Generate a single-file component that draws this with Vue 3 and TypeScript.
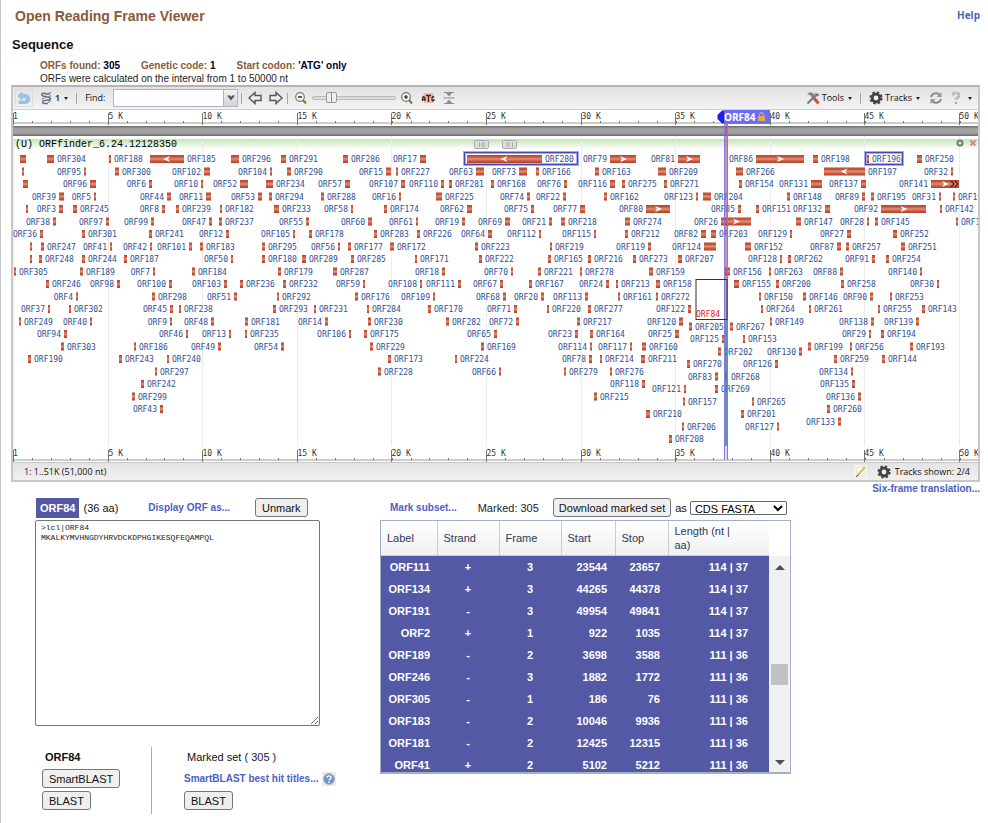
<script setup lang="ts">
import { ref } from 'vue'

interface Orf {
  name: string
  x: number
  y: number
  w: number
  labelX: number
  anchor: 'start' | 'end'
  arrow: '' | 'l' | 'r'
}

// Each line is one lane: "<number><side><x>,<width>[arrow]".
// ">" puts the label right of the bar, "<" left of it, "." draws no label.
const lanes: [number, string][] = [
  [0, '.20,6 304>47,7 188>109,2 185>150,34l 296>231,8 291>281,5 286>343,5 17<420,6 280>467,75l 79<610,26r 81<678,22r 86<756,48r 198>813,5 196>867,2 250>917,5'],
  [1, '.22,2 95<84,2 300>115,4 102<204,6 104<270,2 290>287,4 15<386,5 227>396,2 63<476,8 73<519,8 166>536,3 163>595,4 209>658,8 266>736,7 197>824,41l 32<951,2'],
  [2, '.23,5 96<90,6 6<149,3 10<201,2 52<240,8 234>266,7 57<345,5 107<401,4 110<441,3 281>449,3 168>491,3 76<564,3 116<610,5 275>622,3 271>664,3 154>739,3 131<811,11 137<861,5 141<931,28r'],
  [3, '39<59,5 5<94,2 44<167,4 11<206,5 53<258,4 294>269,3 288>321,3 16<399,2 225>436,6 74<527,3 22<563,3 162>604,3 123<696,2 204>703,8 148>787,3 89<862,3 195>871,3 31<939,2 191>953,2'],
  [4, '.26,2 3<59,4 245>73,4 8<162,3 239>176,3 182>220,2 233>274,5 58<351,2 174>384,3 62<467,5 75<531,3 77<580,5 80<646,24r 85<738,3 151>756,3 132<825,5 92<881,45r 142>940,2'],
  [5, '38<53,3 97<106,3 99<151,3 47<209,3 237>219,3 55<306,3 60<368,4 61<416,2 19<462,3 69<505,5 21<549,3 218>561,4 274>625,5 26<721,30r 147>796,5 28<867,2 145>875,3 192>956,2'],
  [6, '36<40,3 301>82,3 241>149,3 12<226,3 105<293,2 178>309,3 283>374,3 226>417,3 64<488,4 112<539,2 115<594,2 212>625,3 82<701,5 203>711,5 129<790,2 27<847,4 252>893,4'],
  [7, '.30,2 247>41,3 41<110,2 42<150,2 101<189,3 183>200,3 295>262,3 56<338,2 177>348,3 172>390,4 223>475,3 219>550,2 119<648,3 124<704,12 152>745,6 87<837,4 257>846,3 251>901,4'],
  [8, '.30,2 248>39,3 244>82,3 187>124,3 50<231,2 180>262,3 289>302,4 285>351,3 171>415,2 222>479,3 165>548,3 216>588,3 273>633,3 207>678,4 128<780,2 262>788,3 91<872,3 254>886,3'],
  [9, '305>14,2 189>80,3 7<153,2 184>192,3 179>278,3 287>333,4 18<442,3 70<511,2 221>538,3 278>580,2 159>649,4 156>724,6 263>769,2 88<840,3 140<920,2'],
  [10, '246>46,3 98<117,3 100<169,3 103<224,3 236>240,3 232>283,3 59<363,2 108<420,2 111<458,3 67<500,3 167>529,3 24<606,3 213>616,2 158>656,4 155>734,5 200>776,3 258>841,3 30<937,2'],
  [11, '4<76,2 298>152,3 51<234,3 292>277,2 176>355,3 109<433,2 68<503,3 20<541,3 113<585,3 161>618,2 272>656,2 150>759,2 146>803,3 90<870,3 253>890,2'],
  [12, '37<48,2 302>69,2 45<170,3 238>179,2 293>273,3 231>314,2 284>367,2 170>428,3 71<514,3 220>547,2 277>588,3 122<688,3 264>761,2 261>809,2 255>878,2 143>922,3'],
  [13, '249>19,2 40<90,2 9<170,2 48<211,3 181>245,3 14<325,3 230>368,3 282>446,3 72<516,3 217>577,3 120<679,4 149>770,2 138<871,3 139<916,3'],
  [13.4, '205>689,3 267>730,3'],
  [14, '94<64,3 46<186,2 13<229,2 235>245,2 106<349,2 175>364,3 65<494,3 23<575,3 164>590,3 25<675,4 29<869,2 194>881,3'],
  [14.4, '125<722,2 153>743,2'],
  [15, '303>61,3 186>134,2 49<218,3 54<281,3 229>370,3 169>481,3 114<590,2 117<630,2 160>642,4 199>808,3 256>850,2 193>910,3'],
  [15.4, '202>718,3 130<799,3'],
  [16, '190>28,3 243>119,3 240>167,2 173>388,3 224>455,2 78<589,3 214>600,2 211>641,4 259>834,3 144>882,3'],
  [16.4, '270>687,3 126<775,3'],
  [17, '297>155,2 228>378,3 66<499,2 279>564,2 276>610,2 134<851,2'],
  [17.4, '83<715,3 268>725,3'],
  [18, '242>141,3 118<642,3 135<852,3'],
  [18.4, '121<684,2 269>715,3'],
  [19, '299>132,3 215>594,3 136<858,3'],
  [19.4, '157>683,2 265>752,2'],
  [20, '43<160,3 260>827,3'],
  [20.4, '210>646,4 201>741,3'],
  [21, '133<838,3'],
  [21.4, '206>682,2 127<777,2'],
  [22.4, '208>669,3'],
]

const orfs: Orf[] = lanes.flatMap(([lane, line]) =>
  line.split(' ').map((item) => {
    const m = /^(\d*)([<>.])(\d+),(\d+)([lr]?)$/.exec(item)!
    const x = Number(m[3])
    const w = Number(m[4])
    return {
      name: m[1] ? `ORF${m[1]}` : '',
      x,
      w,
      y: 159 + lane * 12.5,
      labelX: m[2] === '<' ? x - 3 : x + w + 3,
      anchor: m[2] === '<' ? 'end' : 'start',
      arrow: m[5] as Orf['arrow'],
    }
  }),
)

const arrowPath = (o: Orf): string => {
  const c = o.x + o.w / 2
  return o.arrow === 'l'
    ? `M${c + 3} ${o.y - 3}L${c - 4} ${o.y}L${c + 3} ${o.y + 3}L${c + 1} ${o.y}Z`
    : `M${c - 3} ${o.y - 3}L${c + 4} ${o.y}L${c - 3} ${o.y + 3}L${c - 1} ${o.y}Z`
}

const major = Array.from({ length: 11 }, (_, i) => ({
  x: Math.round(13 + i * 94.6) + 0.5,
  text: i === 0 ? '1' : `${i * 5} K`,
}))
const minor = Array.from({ length: 51 }, (_, i) => Math.round(13 + i * 18.93) + 0.5)
const rulers = [
  { label: 119, top: 113, line: 123 },
  { label: 456, top: 450, line: 460 },
]

const rows: [string, string, number, number, number, string][] = [
  ['ORF111', '+', 3, 23544, 23657, '114 | 37'],
  ['ORF134', '+', 3, 44265, 44378, '114 | 37'],
  ['ORF191', '-', 3, 49954, 49841, '114 | 37'],
  ['ORF2', '+', 1, 922, 1035, '114 | 37'],
  ['ORF189', '-', 2, 3698, 3588, '111 | 36'],
  ['ORF246', '-', 3, 1882, 1772, '111 | 36'],
  ['ORF305', '-', 1, 186, 76, '111 | 36'],
  ['ORF183', '-', 2, 10046, 9936, '111 | 36'],
  ['ORF181', '-', 2, 12425, 12315, '111 | 36'],
  ['ORF41', '+', 2, 5102, 5212, '111 | 36'],
]

const find = ref('')
const zoom = ref(18)
const format = ref('CDS FASTA')
const sequence = ref('>lcl|ORF84\nMKALKYMVHNGDYHRVDCKDPHGIKESQFEQAMPQL')
</script>

<template>
  <main class="page">
    <header class="top">
      <h1>Open Reading Frame Viewer</h1>
      <a href="#help" class="help">Help</a>
    </header>
    <h2>Sequence</h2>
    <div class="facts">
      <span>ORFs found: <b>305</b></span>
      <span>Genetic code: <b>1</b></span>
      <span>Start codon: <b>'ATG' only</b></span>
    </div>
    <p class="note">ORFs were calculated on the interval from 1 to 50000 nt</p>

    <section class="viewer">
      <div class="toolbar">
        <button class="tool undo" aria-label="Go back">
          <svg width="14" height="14" viewBox="0 0 14 14"><path d="M1 5L5 1V3.500H8.500A4.500 4.500 0 0 1 8.500 12.500H2V10H8A2 2 0 0 0 8 6.500H5V9Z" fill="#9dc3ea" stroke="#7fabd8" stroke-width=".6" /></svg>
        </button>
        <button class="tool strand">
          <svg width="14" height="14" viewBox="0 0 14 14"><path d="M11.500 1.500C10 3.500 8 3.500 6 2.500C3 1.500 1.500 4 4 5C7 6 11 5.500 11.500 7.500C11.500 9.500 8 9 5.500 9.500C3 10 3 12 5 12.500H9" fill="none" stroke="#66727f" stroke-width="1.500" /><path d="M12 4.500C9.500 6.500 6 5.500 2.500 8.500M12 9.500L9 11.500" fill="none" stroke="#8793a0" stroke-width="1.200" /></svg>
          1<i class="caret"></i>
        </button>
        <span class="sep"></span>
        <label for="find">Find:</label>
        <span class="combo">
          <input id="find" v-model="find" type="text" />
          <button aria-label="Recent searches">
            <svg width="8" height="6" viewBox="0 0 8 6"><path d="M0 .5H3L4 2L5 .5H8L4 5.500Z" fill="#555" /></svg>
          </button>
        </span>
        <span class="sep tight"></span>
        <button class="tool" aria-label="Pan left">
          <svg width="14" height="14" viewBox="0 0 14 14"><path d="M1 7L7 1.500V4.500H13V9.500H7V12.500Z" fill="#eee" stroke="#555" stroke-width="1.400" /></svg>
        </button>
        <button class="tool pan" aria-label="Pan right">
          <svg width="14" height="14" viewBox="0 0 14 14"><path d="M13 7L7 1.500V4.500H1V9.500H7V12.500Z" fill="#eee" stroke="#555" stroke-width="1.400" /></svg>
        </button>
        <span class="sep tight"></span>
        <button class="tool" aria-label="Zoom out">
          <svg width="14" height="14" viewBox="0 0 14 14"><path d="M8 8L12 12.500" stroke="#8a8038" stroke-width="2.400" /><circle cx="6" cy="6" r="4.300" fill="#f7f6e4" stroke="#777" stroke-width="1.200" /><path d="M4 6H8" stroke="#222" stroke-width="1.400" /></svg>
        </button>
        <input v-model="zoom" class="slider" type="range" min="0" max="100" aria-label="Zoom" />
        <button class="tool" aria-label="Zoom in">
          <svg width="14" height="14" viewBox="0 0 14 14"><path d="M8 8L12 12.500" stroke="#8a8038" stroke-width="2.400" /><circle cx="6" cy="6" r="4.300" fill="#f7f6e4" stroke="#777" stroke-width="1.200" /><path d="M4 6H8M6 4V8" stroke="#222" stroke-width="1.200" /></svg>
        </button>
        <button class="tool atg" aria-label="Zoom to sequence">
          <svg width="14" height="14" viewBox="0 0 14 14"><rect x="3" y="2" width="9" height="10" fill="#f0b89c" /><path d="M1.500 10V7L2.500 5.500L4 7V10M1.500 8.500H4M5 4.500H10M7.500 4.500V11M13 6.500L12 5.500L11 6.500V9L12 10L13 9V8" fill="none" stroke="#3c2620" stroke-width="1.300" /></svg>
        </button>
        <button class="tool atg" aria-label="Collapse">
          <svg width="14" height="14" viewBox="0 0 14 14"><path d="M2 1.500H12M1.500 7H12.500M2 12.500H12" stroke="#8c8c8c" stroke-width="1.200" /><path d="M4 2H10L7 5.500ZM4 12H10L7 8.500Z" fill="#8c8c8c" /></svg>
        </button>
        <span class="spacer"></span>
        <button class="tool named">
          <svg width="14" height="14" viewBox="0 0 14 14"><path d="M7.500 6.500L12.500 12.500" stroke="#c7513f" stroke-width="2.800" /><path d="M1.500 12.500L10 4" stroke="#777" stroke-width="2" /><path d="M1 3.500L4 1L9 3L6 7L4 4Z" fill="#888" /><path d="M9 4L10 1L11 3L13 2.500L12.500 5L10 5.500Z" fill="#777" /></svg>
          Tools<i class="caret"></i>
        </button>
        <span class="sep"></span>
        <button class="tool named">
          <svg width="14" height="14" viewBox="0 0 14 14"><circle cx="7" cy="7" r="5.600" fill="none" stroke="#444" stroke-width="2" stroke-dasharray="2.500 1.900" /><circle cx="7" cy="7" r="3.800" fill="#eee" stroke="#444" stroke-width="2.800" /></svg>
          Tracks<i class="caret"></i>
        </button>
        <button class="tool refresh" aria-label="Refresh">
          <svg width="14" height="14" viewBox="0 0 14 14"><path d="M2 6C3 2 8 1 11 4M12 8C11 12 6 13 3 10" fill="none" stroke="#888" stroke-width="2" /><path d="M12.500 1V6H7.500ZM1.500 13V8H6.500Z" fill="#999" /></svg>
        </button>
        <button class="tool question" aria-label="Help menu">
          <svg width="12" height="14" viewBox="0 0 12 14"><path d="M3 4.500C3 1 9 1 9 4.500C9 6.500 6 6.500 6 9" fill="none" stroke="#999" stroke-width="2.400" /><path d="M3 4.500C3 1 9 1 9 4.500C9 6.500 6 6.500 6 9" fill="none" stroke="#eee" stroke-width="1" /><circle cx="6" cy="12" r="1.200" fill="#aaa" /></svg>
          <i class="caret wide"></i>
        </button>
      </div>

      <svg class="map" viewBox="13 110 965 352" role="img" aria-label="ORF map">
        <defs>
          <linearGradient id="bar" x2="0" y2="1"><stop offset="0" stop-color="#b9442a" /><stop offset=".25" stop-color="#c8583e" /><stop offset=".5" stop-color="#dd9079" /><stop offset=".75" stop-color="#c8583e" /><stop offset="1" stop-color="#b23e25" /></linearGradient>
          <linearGradient id="band" x2="0" y2="1"><stop offset="0" stop-color="#6c6c6c" /><stop offset=".3" stop-color="#a4a4a4" /><stop offset=".7" stop-color="#a0a0a0" /><stop offset="1" stop-color="#686868" /></linearGradient>
          <linearGradient id="green" x2="0" y2="1"><stop offset="0" stop-color="#c4e3b4" /><stop offset="1" stop-color="#fff" /></linearGradient>
        </defs>
        <rect x="13" y="110" width="965" height="352" fill="#fff" />
        <rect x="13" y="139" width="965" height="10" fill="url(#green)" />
        <path v-for="t in major" :key="t.text" :d="`M${t.x} 125V446`" stroke="#ececec" />
        <rect x="13" y="126" width="965" height="10" fill="url(#band)" />

        <g v-for="r in rulers" :key="r.top">
          <path :d="`M13 ${r.line}H978`" stroke="#999" />
          <path v-for="x in minor" :key="x" :d="`M${x} ${r.line - 2}v2`" stroke="#777" />
          <g v-for="t in major" :key="t.text">
            <path :d="`M${t.x} ${r.top}v12`" stroke="#777" />
            <text class="tick" :x="t.text === '1' ? t.x - 0.5 : t.x" :y="r.label">{{ t.text }}</text>
          </g>
        </g>

        <text class="track" x="15" y="147">(U) ORFfinder_6.24.12128350</text>
        <g fill="#ddd" stroke="#aaa">
          <rect x="474.500" y="140.500" width="14" height="8" rx="1" />
          <rect x="502.500" y="140.500" width="14" height="8" rx="1" />
          <path d="M479.500 142V147M484 142L481 144.500L484 147ZM512.500 142V147M507 142L510 144.500L507 147Z" />
        </g>
        <circle cx="960" cy="143" r="2.500" fill="none" stroke="#777" stroke-width="2" />
        <path d="M970.500 140.500L975.500 145.500M975.500 140.500L970.500 145.500" stroke="#d08878" stroke-width="2" />

        <g fill="#fff" stroke="#a9a9ee" stroke-width="3">
          <rect x="464.500" y="152.500" width="113" height="12" />
          <rect x="865.500" y="152.500" width="37" height="12" />
        </g>
        <g fill="none" stroke="#4848b8">
          <rect x="464.500" y="152.500" width="113" height="12" />
          <rect x="865.500" y="152.500" width="37" height="12" />
        </g>

        <g v-for="(o, i) in orfs" :key="i">
          <rect :x="o.x" :y="o.y - 4" :width="o.w" height="8" fill="url(#bar)" />
          <path v-if="o.arrow" :d="arrowPath(o)" fill="#fff" />
          <text v-if="o.name" class="orf" :x="o.labelX" :y="o.y + 3" :text-anchor="o.anchor">{{ o.name }}</text>
        </g>
        <path d="M951 181L954 184L951 187M955 181L958 184L955 187" fill="none" stroke="#5c1c10" stroke-width="1.300" />

        <rect x="724" y="124" width="4" height="196" fill="#c04468" fill-opacity=".6" />
        <rect x="724" y="320" width="4" height="126" fill="#4f7f8c" fill-opacity=".85" />
        <rect x="724" y="446" width="4" height="14" fill="#dcdcff" />
        <path d="M724.500 124V460M727.500 124V460" stroke="#7b7bf0" />
        <rect x="696" y="279.500" width="31" height="40" fill="none" stroke="#333" />
        <text class="orf selected" x="696" y="317">ORF84</text>
        <path d="M724 110.500H722L717.500 115V119L722 123.500H724Z" fill="#2020e8" />
        <rect x="724" y="110" width="46" height="14" fill="#6c6cf4" />
        <text class="flag" x="724" y="121">ORF84</text>
        <path d="M759.500 117V114.500Q761.500 110.500 763.500 114.500V117" fill="none" stroke="#b5a890" stroke-width="1.300" />
        <rect x="758" y="116" width="7" height="5" fill="#d9aa5c" />
      </svg>

      <footer class="status">
        <span>1: 1..51K (51,000 nt)</span>
        <span class="spacer"></span>
        <svg width="13" height="13" viewBox="0 0 13 13"><rect width="13" height="13" fill="#f6f5ee" /><path d="M2 3Q5 1 10 2V11H4Z" fill="#fff" stroke="#ddd" /><path d="M3 11L11 2" stroke="#dcbf52" stroke-width="2" /><path d="M2 12L4 10" stroke="#444" /></svg>
        <svg width="14" height="14" viewBox="0 0 14 14"><circle cx="7" cy="7" r="5.600" fill="none" stroke="#444" stroke-width="2" stroke-dasharray="2.500 1.900" /><circle cx="7" cy="7" r="3.800" fill="#eee" stroke="#444" stroke-width="2.800" /></svg>
        <span>Tracks shown: 2/4</span>
      </footer>
    </section>
    <div class="six"><a href="#six-frame">Six-frame translation...</a></div>

    <div class="details">
      <section class="left">
        <div class="bar">
          <label class="tag" for="sequence">ORF84</label>
          <span class="aa">(36 aa)</span>
          <a href="#display">Display ORF as...</a>
          <button class="btn unmark">Unmark</button>
        </div>
        <textarea id="sequence" v-model="sequence" spellcheck="false"></textarea>
        <div class="blast">
          <div class="single">
            <b>ORF84</b>
            <button class="btn">SmartBLAST</button>
            <button class="btn">BLAST</button>
          </div>
          <div class="set">
            <span class="settitle">Marked set <i>( 305 )</i></span>
            <span class="titles">
              <a href="#titles">SmartBLAST best hit titles...</a>
              <svg width="14" height="14" viewBox="0 0 14 14"><rect width="14" height="14" fill="#ececec" /><circle cx="7" cy="7" r="5.500" fill="#7391c4" stroke="#a9bbdc" /><path d="M5 5.700C5 3.300 9 3.300 9 5.700C9 7 7 7 7 8.500M7 9.500V11" fill="none" stroke="#fff" stroke-width="1.400" /></svg>
            </span>
            <button class="btn">BLAST</button>
          </div>
        </div>
      </section>

      <section class="right">
        <div class="bar marks">
          <a href="#subset">Mark subset...</a>
          <span class="marked">Marked: 305</span>
          <button class="btn">Download marked set</button>
          <label for="format">as</label>
          <select id="format" v-model="format">
            <option>CDS FASTA</option>
          </select>
        </div>
        <div class="grid">
          <table>
            <colgroup>
              <col class="c1" /><col class="c2" /><col class="c2" /><col class="c4" /><col class="c5" /><col />
            </colgroup>
            <thead>
              <tr><th>Label</th><th>Strand</th><th>Frame</th><th>Start</th><th>Stop</th><th>Length (nt |<br />aa)</th></tr>
            </thead>
            <tbody>
              <tr v-for="row in rows" :key="row[0]">
                <td v-for="(cell, i) in row" :key="i">{{ cell }}</td>
              </tr>
            </tbody>
          </table>
          <div class="scroll" aria-hidden="true">
            <i class="up"></i><i class="thumb"></i><i class="down"></i>
          </div>
        </div>
      </section>
    </div>
  </main>
</template>

<style>
body {
  background: #fff;
}
</style>

<style scoped>
.page {
  min-height: 100vh;
  box-sizing: border-box;
  border-left: 1px solid #c8c8c8;
  padding: 8px 8px 0 10px;
  font: 11px/14px "Liberation Sans", Arial, sans-serif;
  color: #111;
}
a {
  color: #4a62c0;
  font-weight: bold;
  font-size: 10px;
  text-decoration: none;
}
button {
  font: inherit;
  color: inherit;
}
.top {
  display: flex;
  justify-content: space-between;
  padding-left: 4px;
}
h1 {
  margin: 0;
  font-size: 14px;
  line-height: 16px;
  color: #8a5a3c;
}
.help {
  font-family: "Open Sans", sans-serif;
}
h2 {
  margin: 13px 0 0 1px;
  font-size: 13px;
  line-height: 16px;
}
.facts {
  display: flex;
  gap: 21px;
  margin: 6px 0 0 29px;
  font-size: 10px;
  font-weight: bold;
  color: #8a5a3c;
}
.facts b {
  color: #000030;
}
.note {
  margin: 0 0 0 29px;
  font-size: 10px;
  line-height: 12px;
  color: #222;
}
.viewer {
  border: 2px solid #c9c6c6;
  border-top-color: #b8b2b4;
  font-family: "Open Sans", sans-serif;
  font-size: 9px;
}
.toolbar {
  display: flex;
  align-items: center;
  height: 22px;
  padding: 0 6px 0 2px;
  background: linear-gradient(#e2e2e2, #f3f3f3);
  border-bottom: 1px solid #d0d0d0;
}
.spacer {
  flex: 1;
}
.tool {
  display: flex;
  align-items: center;
  gap: 2px;
  padding: 0;
  border: 0;
  background: none;
}
.undo {
  padding: 1px;
  border: 1px solid #dcdcdc;
  border-radius: 2px;
  margin-right: 6px;
}
.strand {
  font-weight: 600;
}
.caret {
  border: 2px solid transparent;
  border-top: 3px solid #222;
  border-bottom: 0;
  margin-left: 2px;
}
.caret.wide {
  margin-left: 4px;
}
.sep {
  width: 1px;
  height: 11px;
  margin: 0 8px;
  background: #aaa49c;
}
.sep.tight {
  margin: 0 6px 0 3px;
}
.combo {
  display: flex;
  margin-left: 8px;
}
.combo input {
  box-sizing: border-box;
  width: 111px;
  height: 18px;
  border: 1px solid #aab6c8;
  padding: 0 4px;
  background: #fff;
  font: inherit;
}
.combo button {
  width: 14px;
  padding: 0;
  border: 1px solid #aab6c8;
  border-left: 0;
  background: linear-gradient(#f4f4f4, #d4d4d4);
  line-height: 0;
}
.pan {
  margin: 0 1px 0 7px;
}
.slider {
  appearance: none;
  width: 84px;
  height: 14px;
  margin: 0 4px;
  background: none;
}
.slider::-webkit-slider-runnable-track {
  height: 4px;
  border: 1px solid #bbb;
  border-radius: 3px;
  background: #ddd;
}
.slider::-webkit-slider-thumb {
  appearance: none;
  width: 11px;
  height: 11px;
  margin-top: -5px;
  border: 1px solid #999;
  border-radius: 2px;
  background: linear-gradient(90deg, #eee 45%, #888 45% 55%, #eee 55%);
}
.atg {
  margin-left: 7px;
}
.refresh {
  margin-left: 9px;
}
.question {
  margin-left: 7px;
}
.map {
  display: block;
  width: 100%;
  height: auto;
}
.orf,
.tick {
  font: 8px "DejaVu Sans Mono", monospace;
  fill: #2f4f94;
}
.tick {
  fill: #333;
}
.selected {
  fill: #e02020;
}
.track {
  font: 10px "Liberation Mono", monospace;
  fill: #000;
}
.flag {
  font: bold 10px "Open Sans", sans-serif;
  fill: #fff;
}
.status {
  display: flex;
  align-items: center;
  gap: 4px;
  height: 17px;
  padding: 0 8px 0 11px;
  border-top: 1px solid #c8c8c8;
  background: linear-gradient(#e4e4e4, #f0f0f0);
}
.status svg:first-of-type {
  margin-right: 6px;
}
.six {
  line-height: 12px;
  text-align: right;
}
.details {
  display: flex;
  gap: 60px;
  padding-left: 24px;
}
.bar {
  display: flex;
  align-items: center;
  height: 25px;
}
.left {
  width: 285px;
}
.tag {
  padding: 3px 4px;
  margin-left: 1px;
  background: #5359a5;
  color: #fff;
  font-weight: bold;
}
.aa {
  margin: 0 30px 0 4px;
}
.btn {
  height: 19px;
  padding: 0 6px;
  border: 1px solid #767676;
  border-radius: 3px;
  background: #efefef;
  line-height: 16px;
}
.unmark {
  margin-left: 25px;
}
textarea {
  display: block;
  box-sizing: border-box;
  width: 100%;
  height: 206px;
  padding: 2px 5px;
  border: 1px solid #767676;
  border-radius: 2px;
  font: 8px/10px "Liberation Mono", monospace;
  color: #222;
}
.blast {
  display: flex;
  margin-top: 21px;
}
.single,
.set {
  display: flex;
  flex: none;
  flex-direction: column;
  align-items: flex-start;
  gap: 3px;
  box-sizing: border-box;
  height: 67px;
  padding-top: 3px;
}
.single {
  width: 117px;
  padding-left: 7px;
  border-right: 1px solid #aaa;
}
.single b {
  margin: 0 0 2px 3px;
}
.set {
  padding-left: 32px;
}
.settitle {
  margin: 0 0 2px 3px;
}
.settitle i {
  font-style: normal;
  color: #223;
}
.titles {
  display: flex;
  align-items: center;
  gap: 4px;
  height: 19px;
  white-space: nowrap;
}
.right {
  width: 411px;
}
.marks {
  padding-left: 10px;
  white-space: nowrap;
}
.marked {
  margin: 0 14px 0 21px;
  color: #223;
}
.marks .btn {
  padding: 0 5px;
}
.marks label {
  margin: 0 3px 0 4px;
}
select {
  width: 97px;
  height: 14px;
  padding: 0;
  border: 1px solid #666;
  border-radius: 2px;
  background: #fff;
  font: inherit;
  color: #000;
}
.grid {
  display: flex;
  height: 251px;
  overflow: hidden;
  border: 1px solid #9fb0c8;
  border-bottom-width: 2px;
}
table {
  flex: 1;
  table-layout: fixed;
  border-collapse: collapse;
}
.c1 {
  width: 56px;
}
.c2 {
  width: 62px;
}
.c4 {
  width: 54px;
}
.c5 {
  width: 53px;
}
th {
  height: 34px;
  padding: 0 6px;
  border-right: 1px solid #ccc;
  border-bottom: 1px solid #ccc;
  background: linear-gradient(#fff, #f0f0f0);
  text-align: left;
  font-weight: normal;
  color: #2c3a5c;
}
th:last-child {
  border-right: 0;
}
td {
  height: 22px;
  padding: 0 8px 0 0;
  background: #5359a5;
  color: #fff;
  font-weight: bold;
  text-align: right;
}
td:first-child {
  padding-right: 7px;
}
td:nth-child(2),
td:nth-child(3) {
  padding: 0;
  text-align: center;
}
td:last-child {
  padding-right: 21px;
}
.scroll {
  display: flex;
  flex-direction: column;
  align-items: center;
  box-sizing: border-box;
  width: 21px;
  margin-top: 35px;
  padding: 9px 0 7px;
  background: #f1f1f1;
}
.up,
.down {
  border: 5px solid transparent;
}
.up {
  border-top: 0;
  border-bottom-color: #505050;
}
.down {
  border-bottom: 0;
  border-top-color: #505050;
  margin-top: auto;
}
.thumb {
  width: 17px;
  height: 21px;
  margin-top: 94px;
  background: #c1c1c1;
}
</style>
